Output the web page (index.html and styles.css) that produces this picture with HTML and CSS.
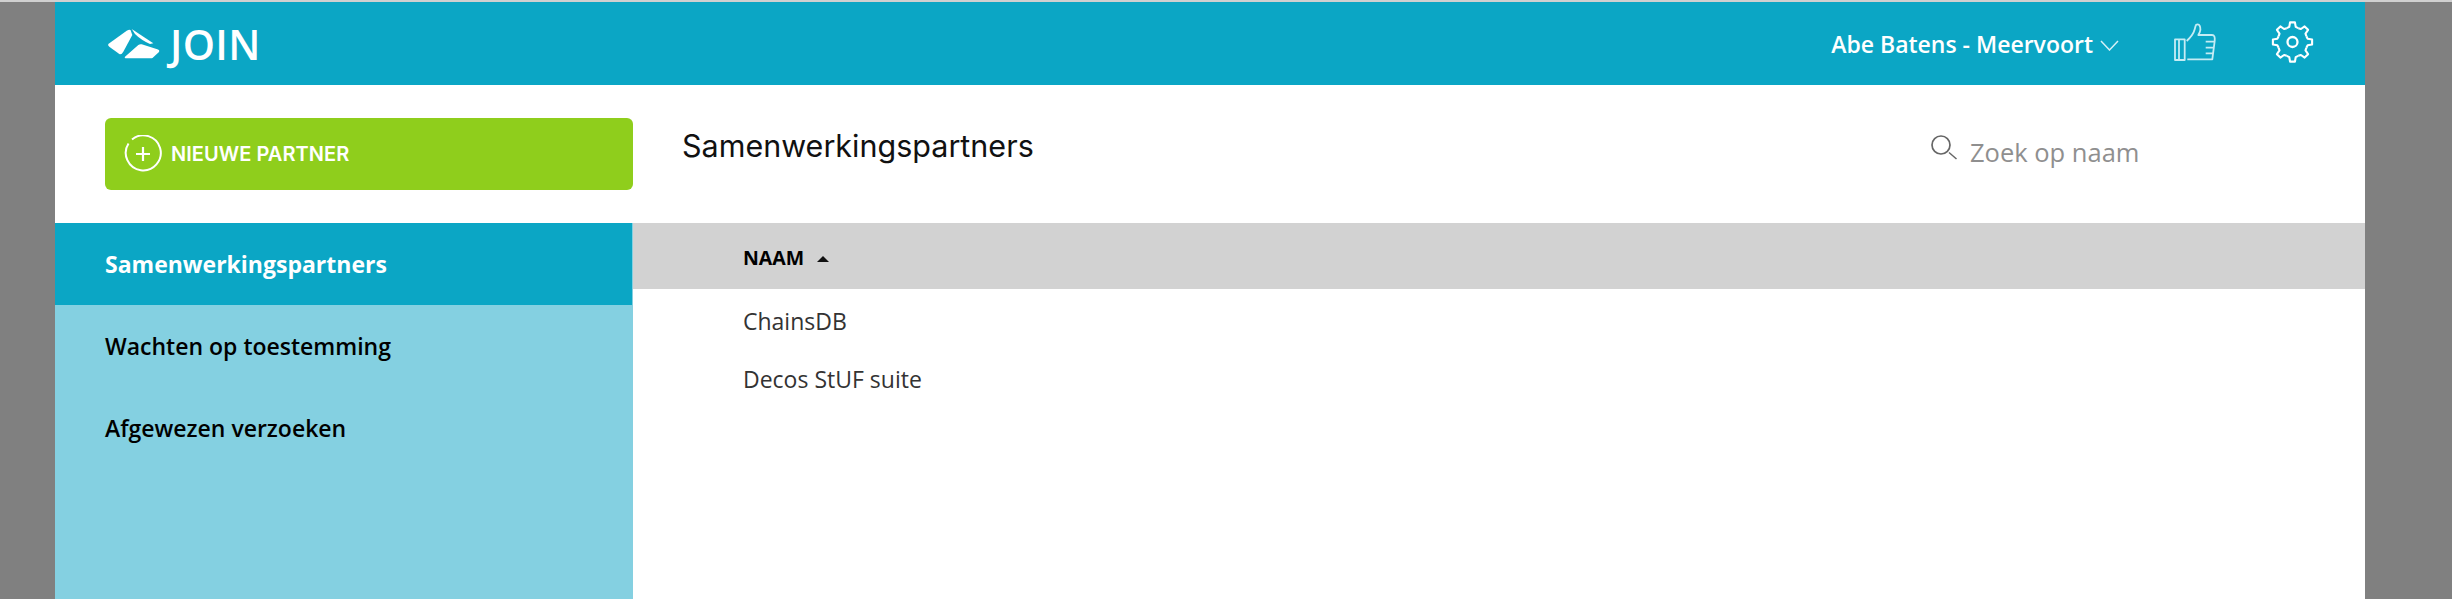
FILE: index.html
```html
<!DOCTYPE html>
<html lang="nl">
<head>
<meta charset="utf-8">
<title>JOIN</title>
<link rel="stylesheet" href="styles.css">
</head>
<body>
<div class="panel">
  <header class="topbar">
    <div class="brand">
      <svg class="logo" viewBox="0 0 54 34" width="54" height="34">
        <path d="M1.300 16 L19.700 2.700 Q23 1 23.700 2.500 L25.300 7 L16.300 23.700 Q14.500 27 12.300 26 L2.300 18.700 Q0.500 17 1.300 16Z" fill="#fff"/>
        <path d="M24.700 1 L46.300 15.300 L43 16 Q34 12 28 6 Z" fill="#fff"/>
        <path d="M18 28.700 L31.300 17 Q33 15.800 34.700 16.300 L50.300 21.300 Q53 22 52 24 L46.300 29.300 Q45.500 30.300 44.700 30.300 L19.700 30.300 Q17 30.300 18 28.700Z" fill="#fff"/>
      </svg>
      <span class="brand-name">JOIN</span>
    </div>
    <div class="user">
      <span class="user-name">Abe Batens - Meervoort</span>
      <svg class="chev" viewBox="0 0 19 11" width="19" height="11"><path d="M1 1 L9.500 10 L18 1" fill="none" stroke="#d4f0f6" stroke-width="1.500"/></svg>
    </div>
    <svg class="thumb" viewBox="0 0 42 38" width="42" height="38"><g fill="none" stroke="#c5ecf4" stroke-width="1.800" stroke-linejoin="round"><path d="M1 16.300 H10.700 V37 H1 Z"/><path d="M5 17 V36.500"/><path d="M12.700 18 C16 15 19.500 11 20.700 6.300 L21.700 2.500 C22 1 25 1 25.500 2.500 C27 5 26.500 8.500 24.300 12 H38 C40.500 12 41 14 40.700 18 L38.300 36.300 H13.300"/><path d="M31.700 18.700 H40.500 M31.700 24.700 H40 M31.700 30.300 H39"/></g></svg>
    <svg class="gear" viewBox="-21.500 -21 43 42" width="43" height="42">
      <defs><path id="tooth" d="M-5.740 -13.860 L-3.220 -15.160 L-2.440 -19.600 L2.440 -19.600 L3.220 -15.160 L5.740 -13.860"/></defs>
      <g fill="none" stroke="#fff" stroke-width="2.100" stroke-linejoin="round">
        <circle r="5" stroke-width="2.300"/>
        <use href="#tooth"/>
        <use href="#tooth" transform="rotate(45)"/>
        <use href="#tooth" transform="rotate(90)"/>
        <use href="#tooth" transform="rotate(135)"/>
        <use href="#tooth" transform="rotate(180)"/>
        <use href="#tooth" transform="rotate(225)"/>
        <use href="#tooth" transform="rotate(270)"/>
        <use href="#tooth" transform="rotate(315)"/>
      </g>
    </svg>
  </header>

  <section class="toolbar">
    <button class="add-btn" type="button">
      <svg class="add-icon" viewBox="0 0 38 38" width="38" height="38"><path d="M8 4.500 A17.500 17.500 0 1 1 4.500 8.500" fill="none" stroke="#fff" stroke-width="2"/><path d="M19 12 V26 M12 19 H26" stroke="#fff" stroke-width="2.200"/></svg>
      <span>NIEUWE PARTNER</span>
    </button>
    <h1 class="page-title">Samenwerkingspartners</h1>
    <div class="search">
      <svg class="search-icon" viewBox="0 0 26 25" width="26" height="25"><circle cx="10" cy="10" r="9" fill="none" stroke="#666" stroke-width="1.700"/><path d="M18 17.500 L25.500 24" stroke="#666" stroke-width="1.500"/></svg>
      <span class="search-text">Zoek op naam</span>
    </div>
  </section>

  <div class="content">
    <nav class="side">
      <a class="side-item active">Samenwerkingspartners</a>
      <a class="side-item">Wachten op toestemming</a>
      <a class="side-item">Afgewezen verzoeken</a>
    </nav>
    <main class="list">
      <div class="list-head"><span>NAAM</span><i class="sort"></i></div>
      <div class="list-row">ChainsDB</div>
      <div class="list-row">Decos StUF suite</div>
    </main>
  </div>
</div>
</body>
</html>
```
FILE: styles.css
```css
html, body { margin: 0; padding: 0; height: 100%; overflow: hidden; }
body { background: #808080; border-top: 2px solid #d0d0d0; box-sizing: border-box; font-family: "Open Sans", sans-serif; }
.panel { margin: 0 87px 0 55px; height: 100%; background: #fff; display: flex; flex-direction: column; }
.topbar { height: 83px; flex: none; background: #0ba6c5; display: flex; align-items: center; color: #fff; padding: 0 51px 0 52px; }
.brand { display: flex; align-items: center; gap: 9px; margin-right: auto; }
.logo { display: block; margin-top: 3px; }
.brand-name { font-size: 41px; line-height: 50px; font-weight: 600; letter-spacing: 0.400px; }
.user { display: flex; align-items: center; gap: 7px; margin-right: 55px; }
.user-name { font-size: 23px; font-weight: 600; }
.chev { margin-top: 4px; }
.thumb { margin-right: 55px; margin-bottom: 4px; }
.gear { margin-bottom: 4px; }
.toolbar { height: 138px; flex: none; display: flex; align-items: flex-start; }
.add-btn { margin: 33px 0 0 50px; width: 528px; height: 72px; border: 0; border-radius: 6px; background: #8fce1c; color: #fff; display: flex; align-items: center; gap: 9px; padding: 0 0 0 19px; font-family: "Inter", sans-serif; font-weight: 600; font-size: 20px; letter-spacing: 0.050px; }
.page-title { margin: 41px 0 0 49px; font-family: "Inter", sans-serif; font-weight: 400; font-size: 30.500px; line-height: 40px; color: #111; }
.search { margin: 50px 0 0 auto; width: 434px; display: flex; align-items: flex-start; gap: 13px; }
.search-text { font-size: 25.500px; color: #8f8f8f; line-height: 34px; }
.content { flex: 1; display: flex; min-height: 0; }
.side { width: 578px; flex: none; background: #84d0e1; display: flex; flex-direction: column; }
.side-item { height: 82px; display: flex; align-items: center; padding-left: 50px; font-size: 23px; font-weight: 600; color: #000; }
.side-item.active { background: #0ba6c5; color: #fff; font-weight: 700; margin-right: 1px; }
.list { flex: 1; }
.list-head { height: 63px; padding: 3px 0 0 110px; margin-bottom: 3px; background: #d2d2d2; display: flex; align-items: center; font-size: 19.500px; font-weight: 700; color: #000; gap: 13px; }
.sort { width: 0; height: 0; border-left: 6px solid transparent; border-right: 6px solid transparent; border-bottom: 6px solid #111; margin-top: 2px; }
.list-row { height: 58px; display: flex; align-items: center; padding-left: 110px; font-size: 23px; color: #333; }
```
